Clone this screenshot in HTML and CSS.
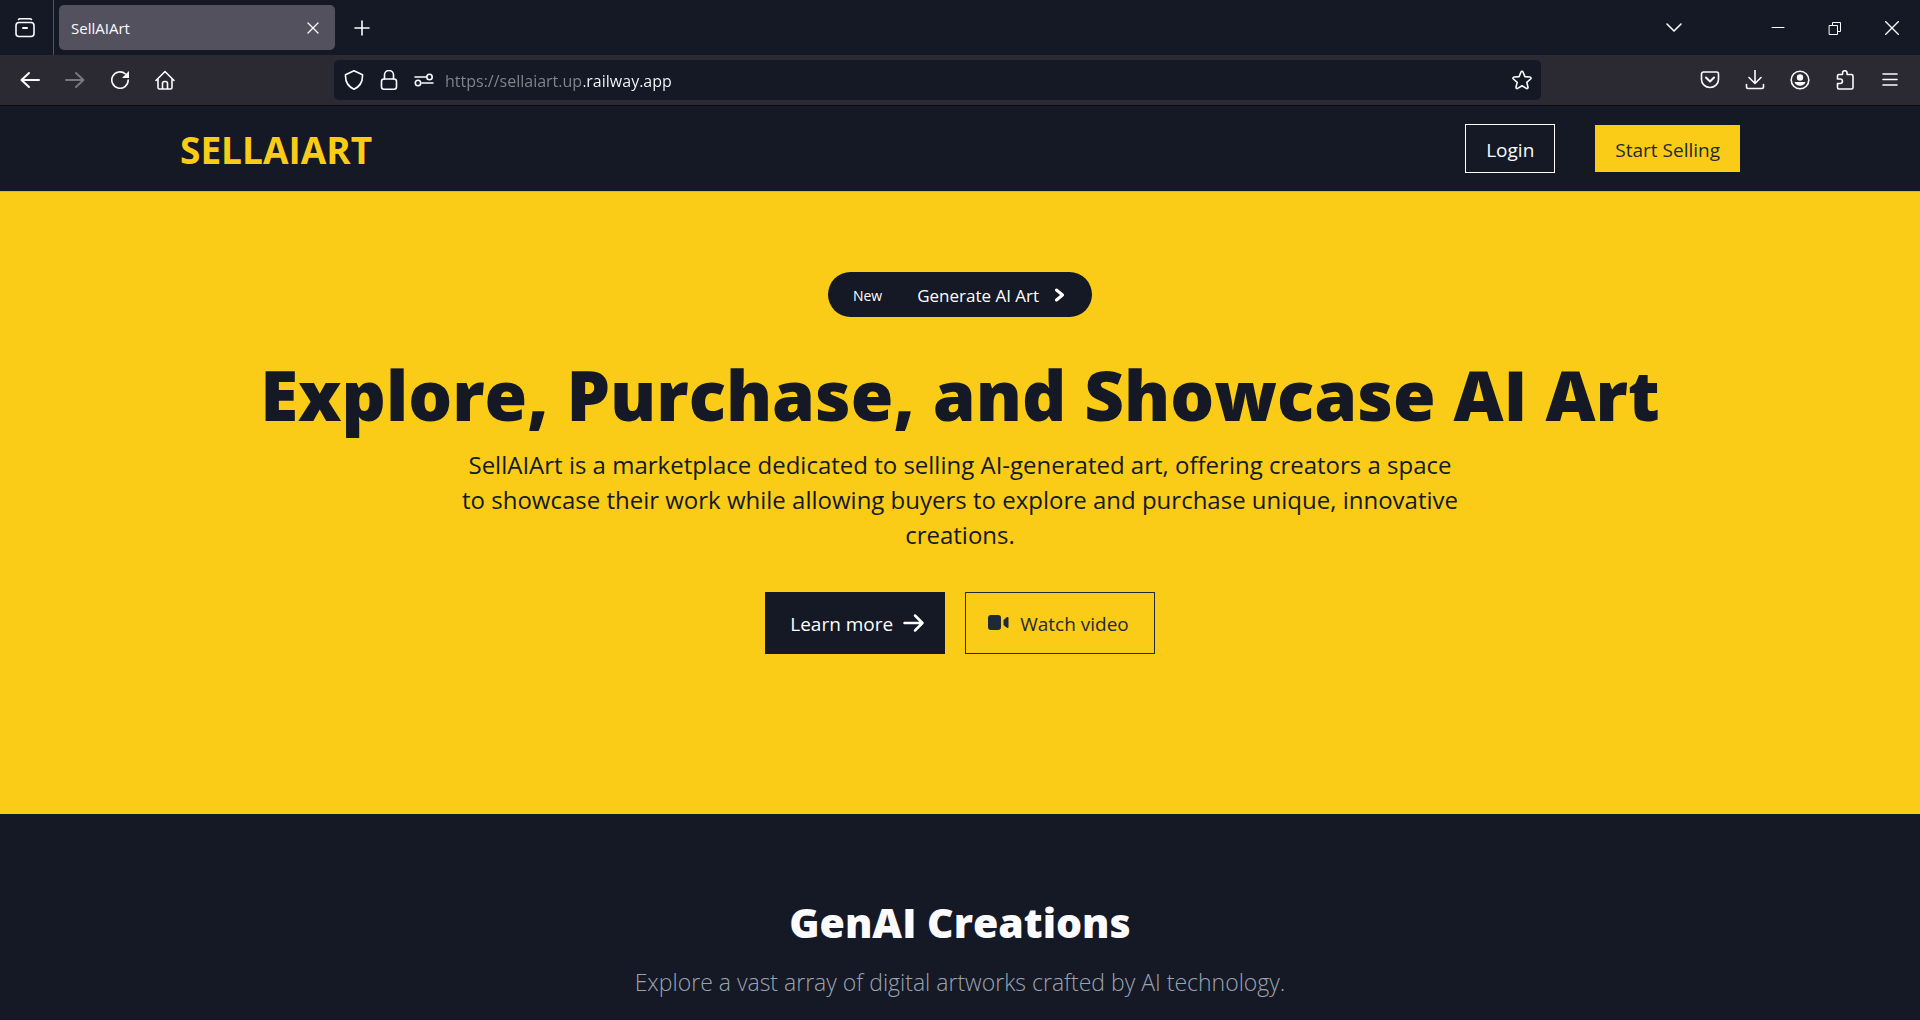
FILE: index.html
```html
<!DOCTYPE html>
<html lang="en">
<head>
  <meta charset="utf-8">
  <meta name="viewport" content="width=device-width, initial-scale=1">
  <title>SellAIArt</title>
  <link rel="stylesheet" href="styles.css">
</head>
<body>
  <div class="browser">
    <div class="tab-strip">
      <button class="icon-btn view-btn" type="button" aria-label="Recent browsing">
        <svg class="icon" viewBox="0 0 20 20"><path d="M3.500 1.500C4 .9 4.500.8 5 .8h10c.5 0 1 .1 1.500.7"/><rect x="1" y="4.500" width="18" height="14" rx="3"/><path class="bold" d="M8 10h4"/></svg>
      </button>
      <div class="tab">
        <span class="tab-title">SellAIArt</span>
        <button class="tab-close" type="button" aria-label="Close tab">
          <svg class="icon-small" viewBox="0 0 12 12"><path d="M1 1l10 10M11 1L1 11"/></svg>
        </button>
      </div>
      <button class="icon-btn" type="button" aria-label="New tab">
        <svg class="icon" viewBox="0 0 20 20"><path d="M10 3v14M3 10h14"/></svg>
      </button>
      <div class="window-controls">
        <button class="icon-btn" type="button" aria-label="List all tabs">
          <svg class="icon" viewBox="0 0 20 20"><path d="M3 6l7 7 7-7"/></svg>
        </button>
        <button class="window-btn first" type="button" aria-label="Minimize">
          <svg class="icon-thin" viewBox="0 0 14 14"><path d="M1 6.500h12"/></svg>
        </button>
        <button class="window-btn" type="button" aria-label="Restore">
          <svg class="icon-thin" viewBox="0 0 14 14"><path d="M1.500 4.500h8v9h-8zM4.500 4.500v-3h8v9h-3"/></svg>
        </button>
        <button class="window-btn" type="button" aria-label="Close">
          <svg class="icon-thin cross" viewBox="0 0 14 14"><path d="M.5.500l13 13M13.500.500l-13 13"/></svg>
        </button>
      </div>
    </div>

    <div class="toolbar">
      <div class="tool-group">
        <button class="icon-btn" type="button" aria-label="Back">
          <svg class="icon bold" viewBox="0 0 20 20"><path d="M19 10H2M9 3l-7.500 7L9 17"/></svg>
        </button>
        <button class="icon-btn" type="button" aria-label="Forward" disabled>
          <svg class="icon bold" viewBox="0 0 20 20"><path d="M1 10h17M11 3l7.500 7-7.500 7"/></svg>
        </button>
        <button class="icon-btn" type="button" aria-label="Reload">
          <svg class="icon" viewBox="0 0 20 20"><path d="M18.200 10A8.200 8.200 0 1 1 15.500 4"/><path class="solid" d="M19 1v7h-7z"/></svg>
        </button>
        <button class="icon-btn" type="button" aria-label="Home">
          <svg class="icon" viewBox="0 0 20 20"><path d="M1 10.500L10 1.500l9 9M3 9v8.500a1.500 1.500 0 0 0 1.500 1.500h11a1.500 1.500 0 0 0 1.500-1.500V9M7.500 19v-5.500a2 2 0 0 1 2-2h1a2 2 0 0 1 2 2V19"/></svg>
        </button>
      </div>

      <div class="url-bar">
        <svg class="icon" viewBox="0 0 20 20"><path d="M10 .8L18.500 4.800C18.800 11 16 16.500 10 19.200 4 16.500 1.200 11 1.500 4.800z"/></svg>
        <svg class="icon" viewBox="0 0 20 20"><rect x="2.500" y="9" width="15" height="10.200" rx="2.500"/><path d="M5.500 9V5a4.500 4.500 0 0 1 9 0v4"/></svg>
        <svg class="icon" viewBox="0 0 20 20"><path d="M1 7h11M8 13h11"/><circle cx="15.500" cy="7" r="2.700"/><circle cx="4" cy="13" r="2.700"/></svg>
        <input class="url" type="text" value="https://sellaiart.up.railway.app" aria-label="Address">
        <svg class="icon" viewBox="0 0 20 20"><path d="M10 1.200c.5 0 .8.300 1 .8l1.900 4.600 5 .4c1.100.1 1.500 1.300.7 2l-3.800 3.300 1.200 4.900c.2 1-.8 1.800-1.700 1.200L10 15.800l-4.300 2.600c-.9.600-1.900-.2-1.700-1.200l1.200-4.900L1.400 9c-.8-.7-.4-1.900.7-2l5-.4L9 2c.2-.5.500-.8 1-.8z"/></svg>
      </div>

      <div class="tool-group">
        <button class="icon-btn" type="button" aria-label="Save to Pocket">
          <svg class="icon" viewBox="0 0 20 20"><path d="M3.500 2h13a2 2 0 0 1 2 2v5.500a8.500 8 0 0 1-17 0V4a2 2 0 0 1 2-2z"/><path class="bold" d="M6 7.500l4 4 4-4"/></svg>
        </button>
        <button class="icon-btn" type="button" aria-label="Downloads">
          <svg class="icon" viewBox="0 0 20 20"><path d="M10 0v13M4 7.500l6 6 6-6M1.500 14.500V17a1.500 1.500 0 0 0 1.500 1.500h14a1.500 1.500 0 0 0 1.500-1.500v-2.500"/></svg>
        </button>
        <button class="icon-btn" type="button" aria-label="Account">
          <svg class="icon" viewBox="0 0 20 20"><circle cx="10" cy="10" r="8.800"/><circle class="solid" cx="10" cy="7.500" r="3.200"/><path class="solid" d="M4.500 12h11c-.8 2.500-2.800 3.800-5.500 3.800S5.300 14.500 4.500 12z"/></svg>
        </button>
        <button class="icon-btn" type="button" aria-label="Extensions">
          <svg class="icon" viewBox="0 0 20 20"><path d="M2.500 9V6A1.500 1.500 0 0 1 4 4.500h3.500V3a2.300 2.300 0 0 1 4.600 0v1.500H16.500A1.500 1.500 0 0 1 18 6v11.500a1.500 1.500 0 0 1-1.500 1.500H4a1.500 1.500 0 0 1-1.500-1.500v-4h2.700a2.200 2.200 0 0 0 0-4.500z"/></svg>
        </button>
        <button class="icon-btn" type="button" aria-label="Menu">
          <svg class="icon" viewBox="0 0 20 20"><path d="M3 4h14M3 9.500h14M3 15h14"/></svg>
        </button>
      </div>
    </div>

    <div class="page">
      <header class="site-header">
        <nav class="nav">
          <a class="brand" href="#">SELLAIART</a>
          <div class="nav-actions">
            <button class="btn-login" type="button">Login</button>
            <button class="btn-sell" type="button">Start Selling</button>
          </div>
        </nav>
      </header>

      <main>
        <section class="hero">
          <a class="pill" href="#">
            <span class="pill-tag">New</span>
            <span class="pill-text">Generate AI Art</span>
            <svg class="pill-chevron" viewBox="0 0 10 14"><path d="M1.500 2L7.500 7l-6 5"/></svg>
          </a>
          <h1 class="hero-title">Explore, Purchase, and Showcase AI Art</h1>
          <p class="hero-text">SellAIArt is a marketplace dedicated to selling AI-generated art, offering creators a space to showcase their work while allowing buyers to explore and purchase unique, innovative creations.</p>
          <div class="hero-actions">
            <a class="btn btn-dark" href="#">
              <span class="btn-label">Learn more</span>
              <svg class="btn-icon" viewBox="0 0 22 20"><path d="M1.500 10h18M12 2.500l7.500 7.500-7.500 7.500"/></svg>
            </a>
            <a class="btn btn-outline" href="#">
              <svg class="btn-icon fill" viewBox="0 0 22 20"><rect x="0" y="2" width="13" height="15" rx="3"/><path d="M15.500 7l3-2.600c1-.7 2-.3 2 .7v8.800c0 1-1 1.300-2 .7l-3-2.600z"/></svg>
              <span class="btn-label">Watch video</span>
            </a>
          </div>
        </section>

        <section class="creations">
          <h2 class="creations-title">GenAI Creations</h2>
          <p class="creations-text">Explore a vast array of digital artworks crafted by AI technology.</p>
        </section>
      </main>
    </div>
  </div>
</body>
</html>
```

FILE: styles.css
```css
:root {
  --ink: #141925;
  --yellow: #facc17;
  --chrome: #2b2a33;
  --light: #fbfbfe;
}

* {
  box-sizing: border-box;
}

body {
  margin: 0;
  font-family: "Open Sans", "Noto Sans", sans-serif;
  background: var(--ink);
}

button {
  padding: 0;
  border: 0;
  background: none;
  color: inherit;
  font: inherit;
  cursor: pointer;
}

a {
  color: inherit;
  text-decoration: none;
}

svg {
  display: block;
  flex: none;
  fill: none;
  stroke: currentColor;
  stroke-linecap: round;
  stroke-linejoin: round;
}

.browser {
  display: flex;
  flex-direction: column;
  height: 100vh;
  color: var(--light);
}

/* Browser chrome */
.icon {
  width: 20px;
  height: 20px;
  stroke-width: 1.6;
}

.bold {
  stroke-width: 2;
}

.solid {
  fill: currentColor;
  stroke: none;
}

.icon-small {
  width: 12px;
  height: 12px;
  stroke-width: 1.3;
}

.icon-thin {
  width: 14px;
  height: 14px;
  stroke-width: 1;
}

.icon-thin.cross {
  stroke-width: 1.4;
}

.icon-btn {
  display: grid;
  place-items: center;
  width: 45px;
  height: 40px;
}

.icon-btn:disabled {
  color: #78777f;
}

.tab-strip {
  display: flex;
  flex: none;
  align-items: center;
  height: 55px;
}

.view-btn {
  width: 54px;
  height: 55px;
  padding-right: 4px;
  border-right: 1px solid #53525e;
}

.tab {
  display: flex;
  align-items: center;
  justify-content: space-between;
  width: 276px;
  height: 45px;
  margin: 0 4px 0 5px;
  padding: 0 16px 0 12px;
  border-radius: 5px;
  background: #53515e;
  box-shadow: 0 0 3px #1c1b22;
}

.tab-title {
  font-size: 15px;
}

.window-controls {
  display: flex;
  align-items: center;
  margin-left: auto;
}

.window-btn {
  display: grid;
  place-items: center;
  width: 57px;
  height: 40px;
}

.window-btn.first {
  margin-left: 53px;
}

.toolbar {
  display: flex;
  flex: none;
  align-items: center;
  justify-content: space-between;
  height: 51px;
  padding: 0 8px 0 7px;
  border-bottom: 1px solid #0c0c10;
  background: var(--chrome);
}

.tool-group {
  display: flex;
}

.url-bar {
  display: flex;
  flex: 1;
  align-items: center;
  gap: 15px;
  height: 40px;
  margin: 0 146px 0 147px;
  padding: 0 9px 0 10px;
  border-radius: 5px;
  background: var(--ink);
}

.url {
  flex: 1;
  min-width: 0;
  margin-left: -4px;
  padding: 2px 0 0;
  border: 0;
  outline: 0;
  background: linear-gradient(to right, #85858c 139px, var(--light) 139px);
  -webkit-background-clip: text;
  background-clip: text;
  color: transparent;
  font: 16px/30px "Open Sans", "Noto Sans", sans-serif;
}

/* Site */
.page {
  flex: 1;
  min-height: 0;
  overflow: hidden;
  border-bottom: 1px solid #1c1220;
}

.site-header {
  border-bottom: 1px solid #e9b41a;
}

.nav {
  display: flex;
  align-items: center;
  justify-content: space-between;
  max-width: 1600px;
  margin: 0 auto;
  padding: 18px 20px;
}

.brand {
  padding-top: 2px;
  color: var(--yellow);
  font-size: 37px;
  font-weight: 700;
  line-height: 46px;
}

.nav-actions {
  display: flex;
  align-items: center;
  gap: 40px;
  font-size: 19px;
}

.btn-login {
  height: 49px;
  padding: 2px 20px 0;
  border: 1px solid #fff;
}

.btn-sell {
  height: 47px;
  padding: 2px 20px 0;
  background: var(--yellow);
  color: #1f2937;
}

.hero {
  display: flex;
  flex-direction: column;
  align-items: center;
  padding: 80px 20px 160px;
  background: var(--yellow);
  color: var(--ink);
  text-align: center;
}

.pill {
  display: flex;
  align-items: center;
  height: 45px;
  padding: 0 27px 0 25px;
  border-radius: 23px;
  background: var(--ink);
  color: #fff;
}

.pill-tag {
  margin-right: 35px;
  padding-top: 2px;
  font-size: 14px;
}

.pill-text {
  margin-right: 16px;
  padding-top: 2px;
  font-size: 17px;
}

.pill-chevron {
  width: 10px;
  height: 14px;
  stroke-width: 3;
}

.hero-title {
  margin: 40px 0 15px;
  font-size: 69px;
  font-weight: 800;
  line-height: 75px;
}

.hero-text {
  max-width: 1010px;
  margin: 0 0 40px;
  font-size: 24px;
  line-height: 35px;
}

.hero-actions {
  display: flex;
  gap: 20px;
}

.btn {
  display: flex;
  align-items: center;
  gap: 10px;
  height: 62px;
  padding: 0 20px 0 25px;
  font-size: 19px;
}

.btn-label {
  padding-top: 2px;
}

.btn-dark {
  background: var(--ink);
  color: #fff;
}

.btn-outline {
  padding: 0 25px 0 22px;
  border: 1px solid #1f2937;
  color: #1f2937;
}

.btn-icon {
  width: 22px;
  height: 20px;
  stroke-width: 2.5;
}

.btn-icon.fill {
  fill: currentColor;
  stroke: none;
}

.creations {
  padding: 80px 20px;
  text-align: center;
}

.creations-title {
  margin: 0 0 15px;
  font-size: 41px;
  font-weight: 800;
  line-height: 56px;
}

.creations-text {
  margin: 0;
  color: #9ca3af;
  font-size: 23px;
  font-weight: 300;
  line-height: 35px;
}
```
